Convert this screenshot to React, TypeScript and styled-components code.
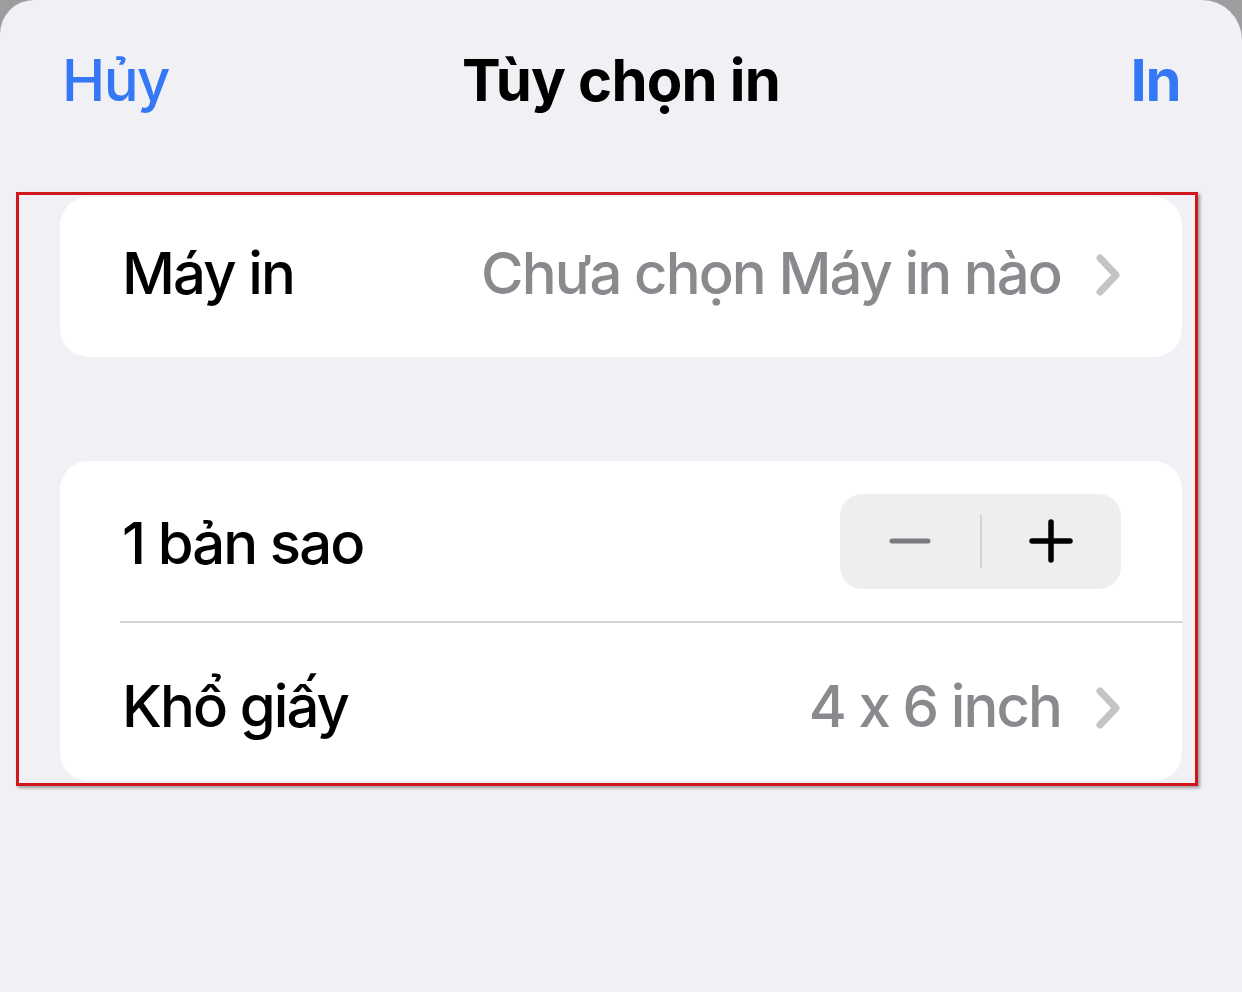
import React, { useState } from 'react'
import styled, { createGlobalStyle } from 'styled-components'

const GlobalStyle = createGlobalStyle`
  html, body {
    margin: 0;
    padding: 0;
    background: #9d9d9f;
  }
  body {
    font-family: Inter, "Noto Sans", "Liberation Sans", sans-serif;
    -webkit-font-smoothing: antialiased;
  }
`

const Chevron = () => (
  <svg width="26" height="44" viewBox="0 0 26 44">
    <polyline
      points="5,5 21,22 5,39"
      fill="none"
      stroke="#c4c4c7"
      strokeWidth="7"
      strokeLinecap="round"
      strokeLinejoin="round"
    />
  </svg>
)

export default () => {
  const [copies, setCopies] = useState(1)

  return (
    <Sheet>
      <GlobalStyle />
      <NavBar>
        <NavButton>Hủy</NavButton>
        <Title>Tùy chọn in</Title>
        <NavButton $bold $right>In</NavButton>
      </NavBar>

      <Content>
        <Group>
          <Row $offset={-8}>
            <Label>Máy in</Label>
            <Value>
              Chưa chọn Máy in nào
              <Chevron />
            </Value>
          </Row>
        </Group>

        <Group $second>
          <Row $offset={4}>
            <Label>{copies} bản sao</Label>
            <Stepper>
              <StepButton onClick={() => setCopies(Math.max(1, copies - 1))}>
                <svg width="42" height="6" viewBox="0 0 42 6">
                  <line x1="3" y1="3" x2="39" y2="3" stroke="#7b7b7f" strokeWidth="5" strokeLinecap="round" />
                </svg>
              </StepButton>
              <StepDivider />
              <StepButton onClick={() => setCopies(copies + 1)}>
                <svg width="44" height="44" viewBox="0 0 44 44">
                  <line x1="3" y1="22" x2="41" y2="22" stroke="#000" strokeWidth="5.5" strokeLinecap="round" />
                  <line x1="22" y1="3" x2="22" y2="41" stroke="#000" strokeWidth="5.5" strokeLinecap="round" />
                </svg>
              </StepButton>
            </Stepper>
          </Row>
          <Separator />
          <Row $last $offset={8}>
            <Label>Khổ giấy</Label>
            <Value>
              4 x 6 inch
              <Chevron />
            </Value>
          </Row>
        </Group>
      </Content>

      <Highlight />
    </Sheet>
  )
}

const Sheet = styled.div`
  position: relative;
  width: 1242px;
  height: 992px;
  background: #f0f0f5;
  border-radius: 34px 40px 0 0;
  overflow: hidden;
`

const NavBar = styled.div`
  height: 164px;
  padding: 0 62px;
  display: grid;
  grid-template-columns: 1fr auto 1fr;
  align-items: center;
  box-sizing: border-box;
`

const NavButton = styled.div<{ $bold?: boolean; $right?: boolean }>`
  color: #3478f6;
  font-size: 58px;
  font-weight: ${p => (p.$bold ? 700 : 500)};
  letter-spacing: -1.5px;
  text-align: ${p => (p.$right ? 'right' : 'left')};
  margin-top: -4px;
`

const Title = styled.div`
  color: #000;
  font-size: 58px;
  font-weight: 700;
  letter-spacing: -0.8px;
  margin-top: -4px;
`

const Content = styled.div`
  padding: 33px 60px 0;
  display: flex;
  flex-direction: column;
`

const Group = styled.div<{ $second?: boolean }>`
  background: #fff;
  border-radius: 28px;
  margin-top: ${p => (p.$second ? '104px' : '0')};
  overflow: hidden;
`

// $offset nudges the text of a row up or down inside its cell
const Row = styled.div<{ $last?: boolean; $offset?: number }>`
  height: ${p => (p.$last ? '158px' : '160px')};
  padding: 0 61px 0 62px;
  display: flex;
  align-items: center;
  justify-content: space-between;
  & > ${'div'}:not([data-stepper]) {
    margin-top: ${p => p.$offset ?? 0}px;
  }
`

const Label = styled.div`
  color: #000;
  font-size: 58px;
  font-weight: 500;
  letter-spacing: -1.9px;
`

const Value = styled.div`
  display: flex;
  align-items: center;
  gap: 34px;
  color: #8a8a8e;
  font-size: 58px;
  font-weight: 500;
  letter-spacing: -1.9px;
  svg {
    margin-top: 4px;
  }
`

const Stepper = styled.div.attrs({ 'data-stepper': true })`
  width: 281px;
  height: 95px;
  background: #eeeeef;
  border-radius: 22px;
  display: flex;
  align-items: center;
`

const StepButton = styled.div`
  flex: 1;
  height: 100%;
  display: flex;
  align-items: center;
  justify-content: center;
  cursor: pointer;
`

const StepDivider = styled.div`
  width: 2px;
  height: 53px;
  background: #d3d3d6;
`

const Separator = styled.div`
  height: 1.5px;
  margin-left: 60px;
  background: #d2d2d6;
`

const Highlight = styled.div`
  position: absolute;
  left: 16px;
  top: 192px;
  width: 1182px;
  height: 594px;
  box-sizing: border-box;
  border: 3.5px solid #d0161c;
  box-shadow: 2px 2px 3px rgba(0, 0, 0, 0.35);
  pointer-events: none;
`
